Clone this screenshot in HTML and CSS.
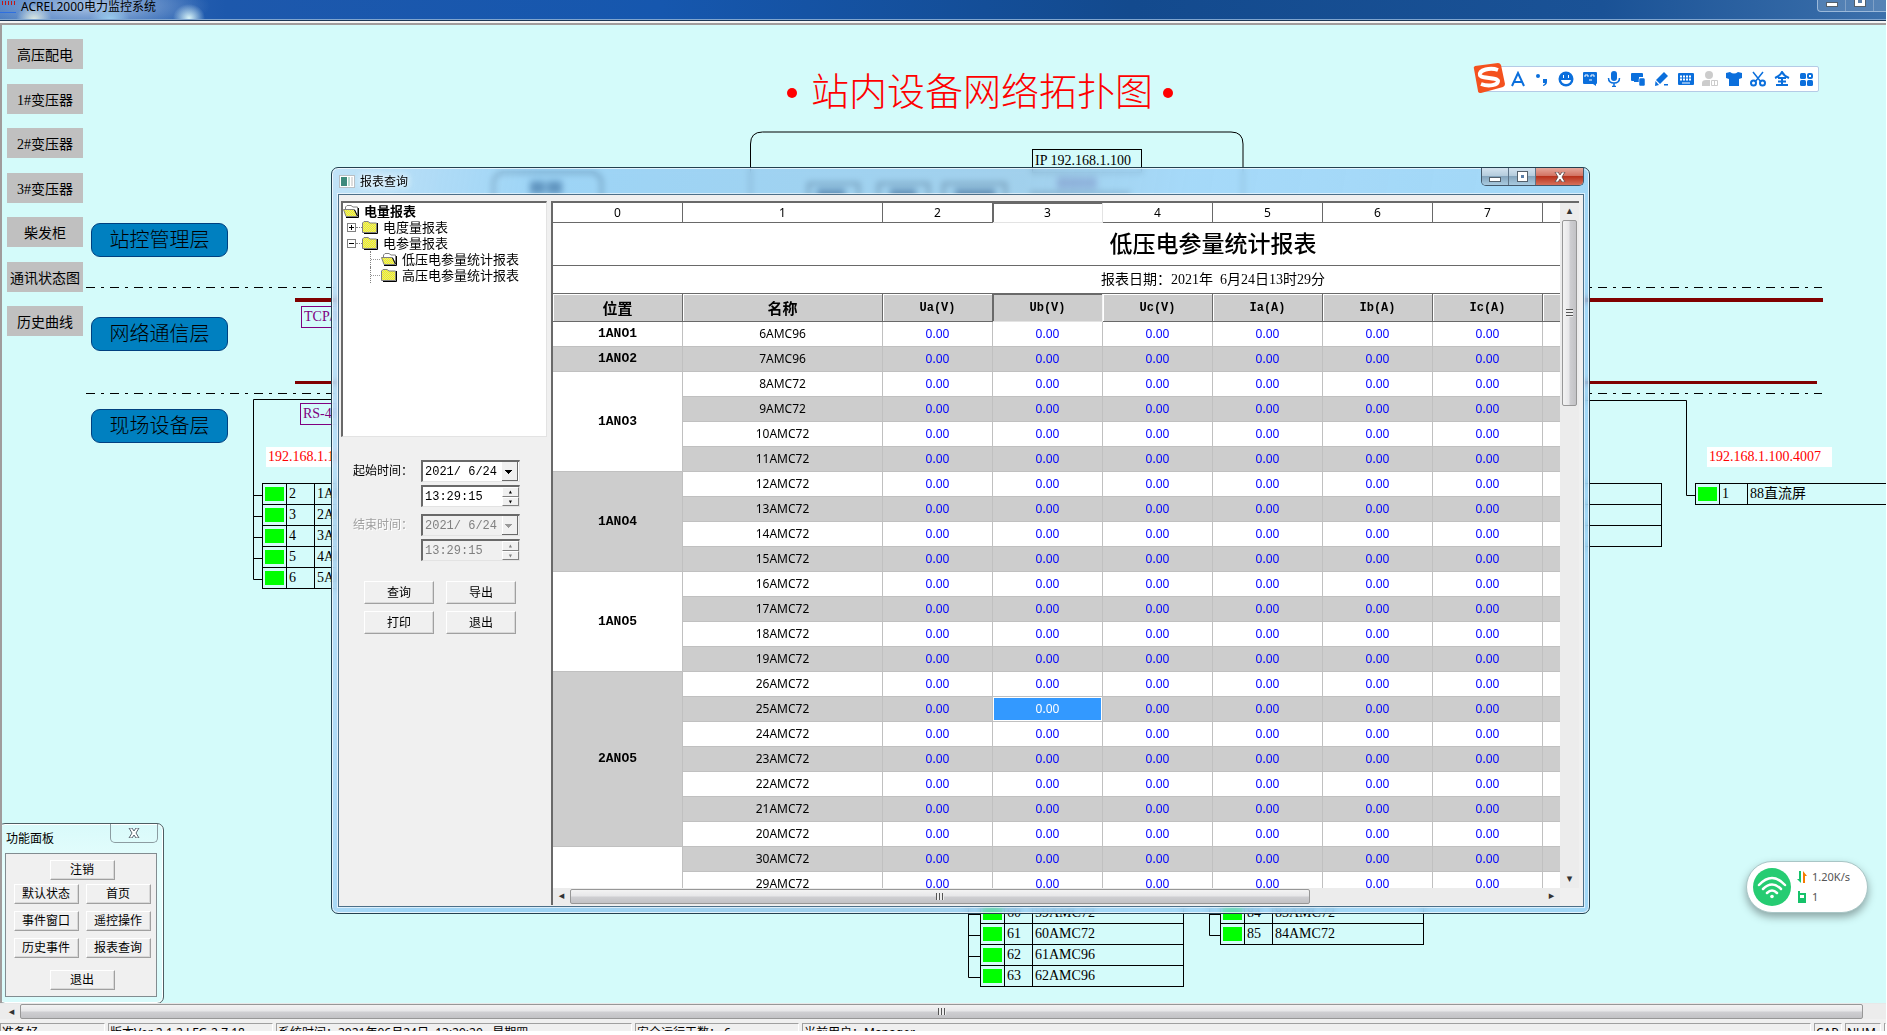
FILE: index.html
```html
<!DOCTYPE html>
<html lang="zh-CN">
<head>
    <meta charset="UTF-8">
    <meta name="viewport" content="width=device-width, initial-scale=1.0">
    <title>ACREL2000电力监控系统</title>
    <link rel="stylesheet" href="styles.css">
</head>
<body>
    <header class="titlebar">
        <svg class="app-icon" width="16" height="14" viewBox="0 0 16 14"><path d="M2.500 1v4M5.500 1v4M8.500 1v4M11.500 1v4M14.500 1v4" stroke="#c01818"/><path d="M0 12.500h16" stroke="#2f6fe0"/></svg>
        <span class="app-title">ACREL2000电力监控系统</span>
        <div class="app-buttons">
            <button class="app-btn" aria-label="最小化"><i class="glyph-min"></i></button>
            <button class="app-btn" aria-label="还原"><i class="glyph-max"></i></button>
            <button class="app-btn" aria-label="关闭"></button>
        </div>
    </header>

    <main class="canvas">
        <!-- 拓扑图连线 -->
        <svg class="wires" width="100%" height="100%">
            <g fill="none" stroke="#000">
                <path d="M86 262.500H1822M86 368.500H1822" stroke-dasharray="9 6 3 6"/>
                <path d="M750.500 400V119q0-12 12-12H1231q12 0 12 12V400"/>
                <path d="M331 374.500H253.500V554.500H262M253 470.500h9M253 491.500h9M253 512.500h9M253 533.500h9"/>
                <path d="M1580 375.500H1686.500V470.500H1695"/>
                <path d="M968.500 850V952.500H980M968 889.500h12M968 910.500h12M968 931.500h12"/>
                <path d="M1209.500 850V910.500H1220M1209 889.500h11"/>
            </g>
            <g fill="none" stroke="#000" stroke-width="2">
                <rect x="493.500" y="147.500" width="108" height="60" rx="10"/>
                <rect x="808.500" y="158.500" width="50" height="30"/>
                <rect x="878.500" y="158.500" width="50" height="30"/>
                <rect x="943.500" y="158.500" width="62" height="30"/>
                <path d="M1030 168.500H1130"/>
            </g>
            <g fill="#0c2a48">
                <rect x="530" y="156" width="15" height="13"/>
                <rect x="547" y="156" width="15" height="13"/>
                <rect x="817" y="164" width="28" height="12"/>
                <rect x="890" y="164" width="26" height="12"/>
                <rect x="955" y="164" width="40" height="12"/>
                <rect x="1057" y="152" width="40" height="12" fill="#604080" opacity=".6"/>
            </g>
            <path d="M295 275H1823" stroke="#800000" stroke-width="4"/>
            <path d="M295 357.500H1817" stroke="#800000" stroke-width="3"/>
            <circle cx="792" cy="68" r="5" fill="#f00"/>
            <circle cx="1168" cy="68" r="5" fill="#f00"/>
        </svg>

        <h1 class="diagram-title">站内设备网络拓扑图</h1>

        <nav class="side-nav">
            <button class="nav-btn">高压配电</button>
            <button class="nav-btn">1#变压器</button>
            <button class="nav-btn">2#变压器</button>
            <button class="nav-btn">3#变压器</button>
            <button class="nav-btn">柴发柜</button>
            <button class="nav-btn">通讯状态图</button>
            <button class="nav-btn">历史曲线</button>
        </nav>

        <div class="layer layer-station">站控管理层</div>
        <div class="layer layer-network">网络通信层</div>
        <div class="layer layer-field">现场设备层</div>

        <div class="tag tag-host">IP 192.168.1.100</div>
        <div class="tag tag-bus tag-tcp">TCP/IP</div>
        <div class="tag tag-bus tag-rs">RS-485</div>
        <div class="tag tag-ip tag-ip-left">192.168.1.100.4001</div>
        <div class="tag tag-ip tag-ip-right">192.168.1.100.4007</div>

        <table class="devices devices-left">
            <tr><td><i class="led"></i></td><td>2</td><td>1AMC96</td></tr>
            <tr><td><i class="led"></i></td><td>3</td><td>2AMC96</td></tr>
            <tr><td><i class="led"></i></td><td>4</td><td>3AMC96</td></tr>
            <tr><td><i class="led"></i></td><td>5</td><td>4AMC96</td></tr>
            <tr><td><i class="led"></i></td><td>6</td><td>5AMC96</td></tr>
        </table>
        <table class="devices devices-mid">
            <tr><td></td><td></td><td></td></tr>
            <tr><td></td><td></td><td></td></tr>
            <tr><td></td><td></td><td></td></tr>
        </table>
        <table class="devices devices-right">
            <tr><td><i class="led"></i></td><td>1</td><td>88直流屏</td></tr>
        </table>
        <table class="devices devices-b1">
            <tr><td><i class="led"></i></td><td>60</td><td>59AMC72</td></tr>
            <tr><td><i class="led"></i></td><td>61</td><td>60AMC72</td></tr>
            <tr><td><i class="led"></i></td><td>62</td><td>61AMC96</td></tr>
            <tr><td><i class="led"></i></td><td>63</td><td>62AMC96</td></tr>
        </table>
        <table class="devices devices-b2">
            <tr><td><i class="led"></i></td><td>84</td><td>83AMC72</td></tr>
            <tr><td><i class="led"></i></td><td>85</td><td>84AMC72</td></tr>
        </table>

        <!-- 输入法工具条 -->
        <div class="ime">
            <svg class="ime-logo" width="34" height="32" viewBox="0 0 34 32">
                <path d="M2 7Q1 5 3 4L26 1q2 0 3 2l4 19q0 2-2 3L9 31q-3 0-3-2z" fill="#f4511e"/>
                <path d="M26 8C18 5 7 8 8 13c1 4 17 2 18 6 0 4-9 6-17 3" fill="none" stroke="#fff" stroke-width="4"/>
            </svg>
            <button class="ime-btn" aria-label="英文"><svg viewBox="0 0 16 16"><path d="M2 15L8 2l6 13M4 11h8" fill="none" stroke="#0b6fdc" stroke-width="2"/></svg></button>
            <button class="ime-btn" aria-label="标点"><svg viewBox="0 0 16 16"><circle cx="4" cy="5" r="2"/><path d="M9 8h4v3q0 3-4 4v-1q2-1 2-2H9z"/></svg></button>
            <button class="ime-btn" aria-label="表情"><svg viewBox="0 0 16 16"><circle cx="8" cy="8" r="7.500"/><path d="M5 4h1v3H5zM10 4h1v3h-1zM3 9h10q-1 4-5 4T3 9z" fill="#fff"/></svg></button>
            <button class="ime-btn" aria-label="斗图"><svg viewBox="0 0 16 16"><path d="M2 1h12q1 0 1 1v10q0 1-1 1v2l-3-2H2q-1 0-1-1V2q0-1 1-1z"/><path d="M3 6V4h3v2M9 6V4h3v2M7 9h3" fill="none" stroke="#fff"/></svg></button>
            <button class="ime-btn" aria-label="语音"><svg viewBox="0 0 16 16"><rect x="5" y="0" width="6" height="10" rx="3"/><path d="M2.500 7q0 5 5.500 5t5.500-5M8 12v4M6 15.500h4" fill="none" stroke="#0b6fdc" stroke-width="1.500"/></svg></button>
            <button class="ime-btn" aria-label="跨屏"><svg viewBox="0 0 16 16"><path d="M2 2h10q1 0 1 1v3H9v5H4V10H2q-1 0-1-1V3q0-1 1-1z"/><rect x="9" y="7" width="6" height="8" rx="1.500" stroke="#fff" stroke-width=".5"/></svg></button>
            <button class="ime-btn" aria-label="手写"><svg viewBox="0 0 16 16"><path d="M10 1l4 4-8 8-4-4zM1.500 10l3.500 4-4 1zM10 13h4v1.500h-4z"/></svg></button>
            <button class="ime-btn" aria-label="软键盘"><svg viewBox="0 0 16 16"><rect x="0" y="2" width="16" height="12" rx="1"/><path d="M2 5.500h12M2 8.500h12" stroke="#fff" stroke-width="2" stroke-dasharray="2 1"/><path d="M4 12h8" stroke="#fff"/></svg></button>
            <button class="ime-btn ime-off" aria-label="账户"><svg viewBox="0 0 16 16"><circle cx="7" cy="4" r="4"/><path d="M0 15V12q0-3 4-3h4v6z"/><path d="M9.500 9.500h6v5h-6zM12.500 9.500v5" fill="none" stroke="#ccc"/></svg></button>
            <button class="ime-btn" aria-label="皮肤"><svg viewBox="0 0 16 16"><path d="M0 2l4-1q4 3 8 0l4 1v5l-3 1v7H3V8L0 7z"/></svg></button>
            <button class="ime-btn" aria-label="截图"><svg viewBox="0 0 16 16"><path d="M3 1l8 10M13 1L5 11" fill="none" stroke="#0b6fdc" stroke-width="1.500"/><g fill="none" stroke="#0b6fdc" stroke-width="2"><circle cx="3.500" cy="12" r="2.500"/><circle cx="12.500" cy="12" r="2.500"/></g></svg></button>
            <button class="ime-btn" aria-label="全角"><svg viewBox="0 0 16 16"><path d="M1 7q5-2 7-6 2 4 7 6M4 7h8M4 10.500h8M2 14h12M8 7v7" fill="none" stroke="#0b6fdc" stroke-width="2"/></svg></button>
            <button class="ime-btn" aria-label="工具箱"><svg viewBox="0 0 16 16"><rect x="2" y="2" width="6" height="6" rx="1.500"/><rect x="2" y="9" width="6" height="6" rx="1.500"/><rect x="9" y="9" width="6" height="6" rx="1.500"/><rect x="10" y="3" width="4" height="4" rx="1" fill="none" stroke="#0b6fdc" stroke-width="2"/></svg></button>
        </div>

        <!-- 报表查询窗口 -->
        <section class="report-win">
            <div class="win-title">
                <svg width="16" height="13" viewBox="0 0 16 13"><rect x=".5" y=".5" width="15" height="12" fill="#fff" stroke="#b9bfc4"/><path d="M2 2h6v9H2z" fill="#3d8a7c"/><path d="M9 2h2v9H9z" fill="#b9dcd0"/><path d="M12 2h2v9h-2z" fill="#dedede"/></svg>
                <span>报表查询</span>
            </div>
            <div class="win-buttons">
                <button class="win-btn" aria-label="最小化"><i class="glyph-min"></i></button>
                <button class="win-btn" aria-label="最大化"><i class="glyph-max"></i></button>
                <button class="win-btn win-close" aria-label="关闭"><svg width="12" height="10" viewBox="0 0 12 10"><path d="M1 0h3l2 3 2-3h3L8 5l3 5H8L6 7l-2 3H1l3-5z" fill="#fff" stroke="#5a4444" stroke-width=".8"/></svg></button>
            </div>
            <div class="win-client">
                <aside class="query">
                    <ul class="tree">
                        <li class="tree-row tree-root"><svg class="folder"><use href="#folder-open"/></svg>电量报表</li>
                        <li class="tree-row tree-l1"><i class="toggle plus"></i><i class="dots"></i><svg class="folder"><use href="#folder"/></svg>电度量报表</li>
                        <li class="tree-row tree-l1"><i class="toggle"></i><i class="dots"></i><svg class="folder"><use href="#folder"/></svg>电参量报表</li>
                        <li class="tree-row tree-l2"><i class="dots elbow"></i><svg class="folder"><use href="#folder-open"/></svg>低压电参量统计报表</li>
                        <li class="tree-row tree-l2"><i class="dots elbow"></i><svg class="folder"><use href="#folder"/></svg>高压电参量统计报表</li>
                    </ul>
                    <form class="range">
                        <label for="start-date">起始时间：</label>
                        <select class="field date" id="start-date"><option>2021/&nbsp;6/24</option></select>
                        <div class="field time">
                            <input type="text" value="13:29:15" aria-label="起始时刻">
                            <span class="spin"><button type="button" aria-label="加">▴</button><button type="button" aria-label="减">▾</button></span>
                        </div>
                        <label class="off second" for="end-date">结束时间：</label>
                        <select class="field date second" id="end-date" disabled><option>2021/&nbsp;6/24</option></select>
                        <div class="field time off">
                            <input type="text" value="13:29:15" aria-label="结束时刻" disabled>
                            <span class="spin"><button type="button" aria-label="加" disabled>▴</button><button type="button" aria-label="减" disabled>▾</button></span>
                        </div>
                    </form>
                    <div class="query-actions">
                        <button class="btn">查询</button>
                        <button class="btn">导出</button>
                        <button class="btn">打印</button>
                        <button class="btn">退出</button>
                    </div>
                </aside>
                <div class="grid">
                    <div class="grid-view">
                        <table class="report">
                            <colgroup>
                                <col class="col-pos"><col class="col-name">
                                <col><col><col><col><col><col><col><col><col>
                            </colgroup>
                            <thead>
                                <tr class="index"><th>0</th><th>1</th><th>2</th><th class="sel">3</th><th>4</th><th>5</th><th>6</th><th>7</th><th></th><th></th><th></th></tr>
                                <tr class="caption"><th colspan="11">低压电参量统计报表</th></tr>
                                <tr class="date-row"><td colspan="11">报表日期：2021年&nbsp; 6月24日13时29分</td></tr>
                                <tr class="heads"><th class="cjk">位置</th><th class="cjk">名称</th><th>Ua(V)</th><th class="sel">Ub(V)</th><th>Uc(V)</th><th>Ia(A)</th><th>Ib(A)</th><th>Ic(A)</th><th></th><th></th><th></th></tr>
                            </thead>
                            <tbody id="rows"></tbody>
                        </table>
                    </div>
                    <div class="scroll-v">
                        <i class="arrow">▴</i><i class="thumb"><b class="grip-v"></b></i><i class="track"></i><i class="arrow">▾</i>
                    </div>
                    <div class="scroll-h">
                        <i class="arrow">◂</i><i class="thumb"><b class="grip"></b></i><i class="track"></i><i class="arrow">▸</i>
                    </div>
                </div>
            </div>
        </section>

        <!-- 功能面板 -->
        <section class="panel">
            <div class="panel-title">功能面板</div>
            <button class="panel-close" aria-label="关闭"><svg width="12" height="10" viewBox="0 0 12 10"><path d="M1 0h3l2 3 2-3h3L8 5l3 5H8L6 7l-2 3H1l3-5z" fill="#fff" stroke="#5a6470"/></svg></button>
            <div class="panel-body">
                <button class="btn wide">注销</button>
                <div class="panel-grid">
                    <button class="btn">默认状态</button>
                    <button class="btn">首页</button>
                    <button class="btn">事件窗口</button>
                    <button class="btn">遥控操作</button>
                    <button class="btn">历史事件</button>
                    <button class="btn">报表查询</button>
                </div>
                <button class="btn wide">退出</button>
            </div>
        </section>

        <!-- 网速悬浮球 -->
        <div class="wifi">
            <svg width="38" height="38" viewBox="0 0 38 38"><circle cx="19" cy="19" r="19" fill="#26cc72"/><g fill="none" stroke="#fff" stroke-width="2.500" stroke-linecap="round"><path d="M6 17q13-14 26 0M10 21q9-9 18 0M14 25q5-5 10 0"/></g><circle cx="19" cy="28.500" r="1.800" fill="#fff"/></svg>
            <div class="wifi-info">
                <span><svg width="12" height="12" viewBox="0 0 12 12"><path d="M3 0h2v12L1 8h2z" fill="#16c26a"/><path d="M7 12h2V5h2L7 0z" fill="#f57c00"/></svg>1.20K/s</span>
                <span><svg width="12" height="12" viewBox="0 0 12 12"><path d="M2 0h2v2h6v10H2z" fill="#16c26a"/><path d="M4 4h4v3H4z" fill="#fff"/></svg>1</span>
            </div>
        </div>
    </main>

    <div class="main-scroll scroll-h">
        <i class="arrow">◂</i><i class="thumb"><b class="grip"></b></i><i class="track"></i>
    </div>
    <footer class="status">
        <span class="pane ready">准备好</span>
        <span class="pane version">版本Ver 2.1.2 LFG-2.7.18</span>
        <span class="pane clock">系统时间：2021年06月24日&nbsp; 13:29:20&nbsp;&nbsp; 星期四</span>
        <span class="pane days">安全运行天数：&nbsp;6</span>
        <span class="pane user">当前用户：Manager</span>
        <span class="pane cap">CAP</span>
        <span class="pane num">NUM</span>
        <span class="pane scrl"></span>
    </footer>

    <svg width="0" height="0" class="defs">
        <pattern id="dither" width="2" height="2" patternUnits="userSpaceOnUse"><rect width="2" height="2" fill="#ff0"/><path d="M0 0h1v1H0zM1 1h1v1H1z" fill="#d8d8a0"/></pattern>
        <symbol id="folder" viewBox="0 0 16 14"><path d="M2 13.500h13.500V3" fill="none" stroke="#000"/><path d="M.5 12.500V3L2 1.500h4L8 3h6.500v9.500z" fill="url(#dither)" stroke="#808080"/></symbol>
        <symbol id="folder-open" viewBox="0 0 16 14"><path d="M3 13.500h12.500V4" fill="none" stroke="#000"/><path d="M2.500 11V3L4 1.500h4L10 3h4.500v9" fill="#fff" stroke="#808080"/><path d="M.5 5.500h11l3 7H3z" fill="url(#dither)" stroke="#808080"/><path d="M11.500 6l3 6" stroke="#000"/></symbol>
    </svg>

    <script>
        // 每组: [位置, 设备名称...]
        const groups = [
            ['1ANO1', '6AMC96'],
            ['1ANO2', '7AMC96'],
            ['1ANO3', '8AMC72', '9AMC72', '10AMC72', '11AMC72'],
            ['1ANO4', '12AMC72', '13AMC72', '14AMC72', '15AMC72'],
            ['1ANO5', '16AMC72', '17AMC72', '18AMC72', '19AMC72'],
            ['2ANO5', '26AMC72', '25AMC72', '24AMC72', '23AMC72', '22AMC72', '21AMC72', '20AMC72'],
            ['', '30AMC72', '29AMC72']
        ];
        const selected = '25AMC72';
        const rows = document.getElementById('rows');

        groups.forEach(([pos, ...names], g) => {
            names.forEach((name, i) => {
                const tr = document.createElement('tr');
                if (i === 0) {
                    const th = document.createElement('th');
                    th.rowSpan = names.length;
                    th.className = g % 2 ? 'pos dark' : 'pos';
                    th.textContent = pos;
                    tr.appendChild(th);
                }
                tr.insertCell().textContent = name;
                for (let c = 2; c < 11; c++) {
                    const td = tr.insertCell();
                    td.className = 'value';
                    if (c < 8) td.textContent = '0.00';
                    if (c === 3 && name === selected) td.classList.add('active');
                }
                rows.appendChild(tr);
            });
        });
    </script>
</body>
</html>
```
FILE: styles.css
```css
* {
    box-sizing: border-box;
}
body {
    margin: 0;
    height: 100vh;
    padding: 0 1px 4px 0;
    display: flex;
    flex-direction: column;
    overflow: hidden;
    background: #fff;
    color: #000;
    font-family: "Noto Sans", "Noto Sans CJK SC", sans-serif;
    font-size: 12px;
}
button, input, select {
    font-family: inherit;
    font-size: inherit;
    color: inherit;
    padding: 0;
    margin: 0;
    border: 0;
    border-radius: 0;
}
i {
    font-style: normal;
}
.defs {
    position: absolute;
}

/* 主窗口标题栏 */
.titlebar {
    flex: none;
    height: 25px;
    display: flex;
    background:
        radial-gradient(ellipse 18px 16px at 34px 20px, #e4efe4, transparent),
        radial-gradient(ellipse 20px 14px at 110px 20px, #9cd0f0, transparent),
        radial-gradient(ellipse 16px 14px at 189px 18px, #d8f4f8, transparent),
        radial-gradient(ellipse 120px 28px at 90px 6px, rgba(190, 210, 235, 0.85), transparent),
        linear-gradient(90deg, #3f74bd, #1d58ac 12%, #1657ae 35%, #134a8e 60%, #1a5296 85%, #3c70ab);
    border-bottom: 2px solid #a09c9c;
    box-shadow: inset 0 -2px #f4f4f4, inset 0 -3px #1b3554, inset 0 -4px #7fa5cf;
}
.app-icon {
    flex: none;
}
.app-title {
    margin-left: 5px;
    line-height: 13px;
    white-space: nowrap;
}
.app-buttons {
    margin-left: auto;
    height: 12px;
    display: flex;
    border: 1px solid #9bb9da;
    border-top: 0;
    border-right: 0;
    border-radius: 0 0 0 4px;
}
.app-btn {
    width: 28px;
    background: rgba(150, 180, 210, 0.3);
    border-right: 1px solid #7fa0c6;
    display: flex;
    align-items: flex-start;
    justify-content: center;
    overflow: hidden;
}
.app-btn:last-child {
    width: 12px;
    border: 0;
}
.glyph-min {
    width: 12px;
    height: 5px;
    margin-top: 5px;
    background: #fff;
    border: 1px solid #53606c;
}
.app-btn .glyph-min {
    margin-top: 2px;
}
.glyph-max {
    width: 10px;
    height: 10px;
    background: #5b7fa8;
    border: 3px solid #fff;
    outline: 1px solid #53606c;
}
.app-btn .glyph-max {
    height: 6px;
    border-top: 0;
}

/* 画布 */
.canvas {
    flex: 1;
    position: relative;
    overflow: hidden;
    background: #d4fbfa;
    border-left: 2px solid #a09c9c;
    min-height: 0;
}
.wires {
    position: absolute;
    left: -2px;
    top: 0;
    width: calc(100% + 2px);
    height: 100%;
}
.diagram-title {
    position: absolute;
    left: 809px;
    top: 41px;
    margin: 0;
    color: #f00;
    font-size: 38px;
    line-height: 48px;
    font-weight: 300;
    white-space: nowrap;
}
.side-nav {
    position: absolute;
    left: 5px;
    top: 14px;
    width: 76px;
    height: 297px;
    display: flex;
    flex-direction: column;
    justify-content: space-between;
}
.nav-btn {
    height: 30px;
    background: #c0c0c0;
    font-family: "Liberation Serif", "Noto Sans CJK SC", serif;
    font-size: 14px;
    white-space: nowrap;
}
.layer {
    position: absolute;
    left: 89px;
    width: 137px;
    height: 34px;
    background: #0080c0;
    border: 1px solid #004080;
    border-radius: 9px;
    font-size: 20px;
    font-weight: 300;
    line-height: 32px;
    text-align: center;
}
.layer-station { top: 198px; }
.layer-network { top: 292px; }
.layer-field { top: 384px; }

.tag {
    position: absolute;
    padding: 0 2px;
    font-family: "Liberation Serif", serif;
    font-size: 14px;
    line-height: 20px;
    white-space: nowrap;
}
.tag-host {
    left: 1030px;
    top: 124px;
    padding-right: 10px;
    border: 1px solid #000;
    line-height: 22px;
}
.tag-bus {
    color: #800080;
    border: 1px solid #800080;
}
.tag-tcp { left: 299px; top: 281px; }
.tag-rs { left: 298px; top: 378px; }
.tag-ip {
    color: #f00;
    background: #fff;
    padding-right: 11px;
}
.tag-ip-left { left: 264px; top: 422px; }
.tag-ip-right { left: 1705px; top: 422px; }

.devices {
    position: absolute;
    width: 204px;
    table-layout: fixed;
    border-collapse: collapse;
    font-family: "Liberation Serif", "Noto Sans CJK SC", serif;
    font-size: 14px;
    line-height: 18px;
}
.devices td {
    height: 21px;
    padding: 0 1px 0 2px;
    border: 1px solid #000;
    white-space: nowrap;
}
.devices td:nth-child(1) { width: 24px; }
.devices td:nth-child(2) { width: 28px; }
.led {
    display: block;
    width: 19px;
    height: 14px;
    background: #0f0;
}
.devices-left { left: 260px; top: 458px; }
.devices-mid { left: 1456px; top: 458px; }
.devices-right { left: 1693px; top: 458px; }
.devices-b1 { left: 978px; top: 877px; }
.devices-b2 { left: 1218px; top: 877px; }

/* 输入法 */
.ime {
    position: absolute;
    left: 1476px;
    top: 41px;
    height: 26px;
    padding-left: 27px;
    display: flex;
    align-items: center;
    background: #fff;
    border: 1px solid #b4cbe6;
    border-radius: 2px;
}
.ime-logo {
    position: absolute;
    left: -7px;
    top: -5px;
}
.ime-btn {
    width: 24px;
    height: 24px;
    display: flex;
    align-items: center;
    justify-content: center;
    background: none;
}
.ime-btn svg {
    width: 16px;
    height: 16px;
    fill: #0b6fdc;
}
.ime-off svg {
    fill: #ccc;
}

/* 报表窗口 */
.report-win {
    position: absolute;
    left: 329px;
    right: 296px;
    top: 142px;
    bottom: 89px;
    padding: 0 5px 6px 6px;
    display: flex;
    flex-direction: column;
    border: 1px solid #24404f;
    border-radius: 7px;
    box-shadow: inset 0 0 0 1px rgba(255, 255, 255, 0.7);
    background: linear-gradient(100deg, rgba(190, 222, 246, 0.85), rgba(134, 196, 244, 0.7) 15%, rgba(140, 190, 230, 0.7) 50%, rgba(150, 206, 248, 0.75) 62%, rgba(140, 200, 244, 0.7));
    backdrop-filter: blur(3px);
}
.win-title {
    flex: none;
    height: 26px;
    padding-left: 1px;
    display: flex;
    align-items: center;
    gap: 5px;
    text-shadow: 0 0 6px #fff, 0 0 8px #fff;
}
.win-buttons {
    position: absolute;
    right: 5px;
    top: 0;
    height: 18px;
    display: flex;
    border: 1px solid #43586b;
    border-top: 0;
    border-radius: 0 0 5px 5px;
    overflow: hidden;
}
.win-btn {
    width: 27px;
    display: flex;
    align-items: center;
    justify-content: center;
    border-right: 1px solid #5d7488;
    background: linear-gradient(#d3e3ef, #b3cbdc 48%, #85a5bd 50%, #a9cbe0);
}
.win-btn .glyph-max {
    width: 9px;
    height: 9px;
}
.win-btn.win-close {
    width: 47px;
    border: 0;
    background: linear-gradient(#e6a79b, #d1705f 48%, #b8321c 50%, #d6705a);
}
.win-client {
    flex: 1;
    min-height: 0;
    display: flex;
    background: #f0f0f0;
    border: 1px solid #4d6f88;
    box-shadow: 0 0 0 1px rgba(255, 255, 255, 0.6);
}

.query {
    flex: none;
    width: 212px;
    padding: 6px 4px 0 2px;
}
.tree {
    height: 236px;
    margin: 0;
    padding: 0;
    list-style: none;
    background: #fff;
    border: 2px solid #696969;
    border-right: 1px solid #e3e3e3;
    border-bottom: 1px solid #e3e3e3;
    font-size: 13px;
}
.tree-row {
    height: 16px;
    display: flex;
    align-items: center;
    line-height: 16px;
    white-space: nowrap;
}
.tree-root { font-weight: bold; }
.tree-l1 { padding-left: 4px; }
.tree-l2 { padding-left: 27px; }
.folder {
    width: 16px;
    height: 14px;
    margin-right: 5px;
}
.toggle {
    width: 9px;
    height: 9px;
    border: 1px solid #808080;
    background: linear-gradient(#000, #000) center / 5px 1px no-repeat;
}
.toggle.plus {
    background:
        linear-gradient(#000, #000) center / 5px 1px no-repeat,
        linear-gradient(#000, #000) center / 1px 5px no-repeat;
}
.dots {
    width: 6px;
    border-top: 1px dotted #808080;
}
.elbow {
    width: 11px;
    height: 16px;
    border-top: 0;
    border-left: 1px dotted #808080;
    background: linear-gradient(90deg, #999 50%, transparent 50%) 0 8px / 2px 1px repeat-x;
}

.range {
    margin: 23px 0 0 12px;
    display: grid;
    grid-template-columns: 68px 99px;
    row-gap: 3px;
}
.range label {
    line-height: 22px;
    white-space: nowrap;
}
.range .time {
    grid-column: 2;
}
.second {
    margin-top: 4px;
}
.off {
    color: #a0a0a0;
}
label.off {
    text-shadow: 1px 1px #fff;
}
.field {
    height: 22px;
    background: #fff;
    border: 2px solid #696969;
    border-right: 1px solid #e3e3e3;
    border-bottom: 1px solid #e3e3e3;
    font-family: "Liberation Mono", monospace;
    font-size: 12px;
}
.date {
    appearance: none;
    padding-left: 2px;
    background:
        linear-gradient(#000, #000) right 8px top 9px / 5px 1px no-repeat,
        linear-gradient(#000, #000) right 7px top 8px / 7px 1px no-repeat,
        linear-gradient(#000, #000) right 9px top 10px / 3px 1px no-repeat,
        linear-gradient(#000, #000) right 10px top 11px / 1px 1px no-repeat,
        linear-gradient(#696969, #696969) right 1px top 0 / 1px 100% no-repeat,
        linear-gradient(#696969, #696969) right 1px bottom 0 / 16px 1px no-repeat,
        linear-gradient(#f0f0f0, #f0f0f0) right 1px top 0 / 16px 100% no-repeat,
        #fff;
}
.date:disabled {
    color: #808080;
    opacity: 1;
    background:
        linear-gradient(#999, #999) right 8px top 9px / 5px 1px no-repeat,
        linear-gradient(#999, #999) right 7px top 8px / 7px 1px no-repeat,
        linear-gradient(#999, #999) right 9px top 10px / 3px 1px no-repeat,
        linear-gradient(#999, #999) right 10px top 11px / 1px 1px no-repeat,
        linear-gradient(#696969, #696969) right 1px top 0 / 1px 100% no-repeat,
        linear-gradient(#696969, #696969) right 1px bottom 0 / 16px 1px no-repeat,
        linear-gradient(#fff, #fff) right 16px top 0 / 1px 100% no-repeat,
        #f0f0f0;
}
.time {
    display: flex;
}
.time input {
    flex: 1;
    min-width: 0;
    padding-left: 2px;
    background: none;
}
.time.off {
    background: #f0f0f0;
    color: #808080;
}
.spin {
    width: 17px;
    display: flex;
    flex-direction: column;
}
.spin button {
    flex: 1;
    min-height: 0;
    overflow: hidden;
    background: #f0f0f0;
    border: 1px solid #fff;
    border-right-color: #808080;
    border-bottom-color: #808080;
    font-size: 8px;
    line-height: 7px;
}
.btn {
    height: 20px;
    background: #f0f0f0;
    border: 1px solid #fff;
    border-right-color: #a0a0a0;
    border-bottom-color: #a0a0a0;
    box-shadow: inset -1px -1px #d8d8d8;
    font-size: 12px;
    line-height: 16px;
    white-space: nowrap;
}
.query-actions {
    margin: 20px 0 0 23px;
    display: grid;
    grid-template-columns: 70px 70px;
    gap: 7px 12px;
}
.query-actions .btn {
    height: 23px;
}

/* 报表表格 */
.grid {
    flex: 1;
    min-width: 0;
    margin: 6px 4px 1px 0;
    display: grid;
    grid-template: minmax(0, 1fr) 17px / minmax(0, 1fr) 19px;
    border-left: 2px solid #696969;
    border-top: 2px solid #696969;
}
.grid-view {
    overflow: hidden;
    background: #fff;
}
.report {
    width: 1320px;
    table-layout: fixed;
    border-collapse: separate;
    border-spacing: 0;
    text-align: center;
    line-height: 18px;
}
.report col { width: 110px; }
.report .col-pos { width: 130px; }
.report .col-name { width: 200px; }
.report th, .report td {
    padding: 0;
    overflow: hidden;
    white-space: nowrap;
}
.index th {
    height: 20px;
    border-right: 1px solid #696969;
    border-bottom: 1px solid #696969;
    font-weight: normal;
}
.index .sel {
    border-right-color: #e3e3e3;
    border-bottom-color: #e3e3e3;
    box-shadow: inset 1px 1px #696969;
}
.caption th {
    height: 43px;
    border-bottom: 1px solid #696969;
    font-size: 23px;
    font-weight: 500;
    line-height: 40px;
    padding-bottom: 2px;
}
.date-row td {
    height: 28px;
    border-bottom: 1px solid #696969;
    font-family: "Liberation Serif", "Noto Sans CJK SC", serif;
    font-size: 14px;
}
.heads th {
    height: 28px;
    background: #cdcdcd;
    border-right: 1px solid #696969;
    border-bottom: 1px solid #696969;
    box-shadow: inset 1px 1px #fff;
    font-family: "Liberation Mono", monospace;
    font-size: 12px;
}
.heads .sel {
    border-right-color: #f4f4f4;
    border-bottom-color: #e3e3e3;
    box-shadow: inset 1px 1px #696969;
}
.heads .cjk {
    font-family: "Noto Sans CJK SC", sans-serif;
    font-size: 15px;
}
.report tbody th, .report tbody td {
    height: 25px;
    border-right: 1px solid #c0c0c0;
    border-bottom: 1px solid #c0c0c0;
}
.report tbody td {
    font-size: 12px;
}
.report tbody tr:nth-child(even) td {
    background: #cdcdcd;
}
.report .pos {
    font-family: "Liberation Mono", monospace;
    font-size: 13px;
}
.report .pos.dark {
    background: #cdcdcd;
}
.report .value {
    color: #00f;
}
.report tbody tr td.active {
    background: #39f;
    color: #fff;
    box-shadow: inset 0 0 0 1px #fff;
}

/* 滚动条 */
.scroll-v, .scroll-h {
    display: flex;
    background: #ececec;
    align-items: stretch;
}
.scroll-v {
    flex-direction: column;
    padding: 0 2px 0 2px;
}
.arrow {
    flex: none;
    width: 17px;
    height: 17px;
    font-family: "DejaVu Sans", sans-serif;
    font-size: 11px;
    line-height: 16px;
    text-align: center;
    color: #333;
}
.scroll-v .arrow {
    width: 15px;
}
.scroll-h .thumb {
    flex: 740;
    margin: 1px 0;
    display: flex;
    align-items: center;
    justify-content: center;
    border: 1px solid #979797;
    border-radius: 2px;
    background: linear-gradient(#f3f3f3, #e6e6e8 48%, #cfcfd2 52%, #c2c2c5);
}
.scroll-h .track {
    flex: 233;
}
.scroll-v .thumb {
    flex: 185;
    display: flex;
    align-items: center;
    justify-content: center;
    border: 1px solid #979797;
    border-radius: 2px;
    background: linear-gradient(90deg, #f3f3f3, #e6e6e8 48%, #cfcfd2 52%, #c2c2c5);
}
.scroll-v .track {
    flex: 466;
}
.grip {
    width: 8px;
    height: 7px;
    background: repeating-linear-gradient(90deg, #555 0 1px, #eee 1px 3px);
}
.grip-v {
    width: 7px;
    height: 8px;
    background: repeating-linear-gradient(#555 0 1px, #eee 1px 3px);
}
.main-scroll {
    flex: none;
    height: 16px;
    padding-left: 3px;
    border-top: 1px solid #e8e8e8;
}
.main-scroll .thumb {
    flex: 1842;
    margin: 0;
}
.main-scroll .track {
    flex: 23;
}

/* 功能面板 */
.panel {
    position: absolute;
    left: -4px;
    bottom: -1px;
    width: 166px;
    height: 181px;
    padding: 0 6px 6px;
    display: flex;
    flex-direction: column;
    background: linear-gradient(#d9fafa, #e8fffe 30%, #d9fbfb);
    border: 1px solid #4d5d62;
    border-radius: 7px;
    box-shadow: inset 0 0 0 1px #fff;
}
.panel-title {
    height: 29px;
    padding-left: 1px;
    line-height: 29px;
}
.panel-close {
    position: absolute;
    right: 5px;
    top: 0;
    width: 48px;
    height: 19px;
    display: flex;
    align-items: center;
    justify-content: center;
    background: none;
    border: 1px solid #8c9ca1;
    border-top: 0;
    border-radius: 0 0 5px 5px;
}
.panel-body {
    flex: 1;
    padding: 6px 5px 6px 7px;
    display: flex;
    flex-direction: column;
    align-items: center;
    justify-content: space-between;
    background: #f0f0f0;
    border: 1px solid #828c90;
}
.panel .wide {
    width: 65px;
}
.panel-grid {
    display: grid;
    grid-template-columns: 65px 65px;
    gap: 7px;
    margin-bottom: 8px;
}

/* 网速 */
.wifi {
    position: absolute;
    right: 18px;
    bottom: 90px;
    width: 122px;
    height: 52px;
    padding-left: 6px;
    display: flex;
    align-items: center;
    gap: 5px;
    background: #fff;
    border: 1px solid #a9c6c6;
    border-radius: 26px;
    box-shadow: 0 4px 8px rgba(0, 0, 0, 0.35);
    color: #555;
    font-size: 11px;
}
.wifi-info span {
    display: flex;
    align-items: center;
    gap: 4px;
    line-height: 20px;
}

/* 状态栏 */
.status {
    flex: none;
    height: 12px;
    padding-top: 4px;
    display: flex;
    gap: 3px;
    overflow: hidden;
    background: #f0f0f0;
}
.pane {
    flex: none;
    height: 20px;
    padding-left: 1px;
    border: 1px solid #a0a0a0;
    border-right-color: #fff;
    line-height: 17px;
    white-space: nowrap;
}
.ready { width: 105px; }
.version { width: 165px; }
.clock { width: 356px; }
.days { width: 164px; }
.user { flex: 1; }
.cap { width: 28px; }
.num { width: 36px; }
.scrl { width: 2px; padding: 0; }
```
